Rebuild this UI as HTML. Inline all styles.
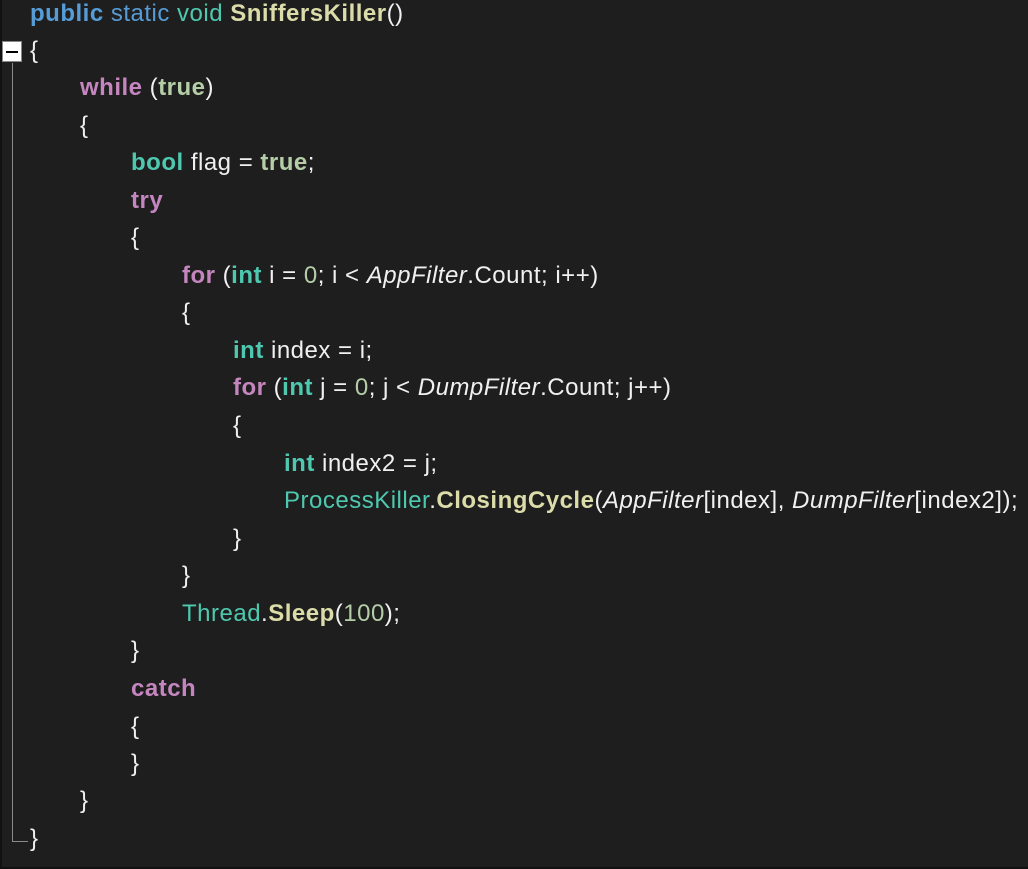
<!DOCTYPE html>
<html><head><style>
html,body{margin:0;padding:0;}
body{width:1028px;height:869px;background:#1e1e1e;position:relative;overflow:hidden;font-family:"Liberation Sans",sans-serif;font-size:24px;letter-spacing:0.5px;color:#f0f0f0;}
.l{position:absolute;height:30px;line-height:30px;white-space:pre;}
.b{color:#569cd6}.t{color:#4ec9b0}.y{color:#dcdcaa}.p{color:#c586c0}.g{color:#b5cea8}
.B{font-weight:bold}.i{font-style:italic}
#edge{position:absolute;left:0;top:0;width:2px;height:869px;background:#111}
#bot{position:absolute;left:0;bottom:0;width:1028px;height:2px;background:#111}
</style></head><body>
<div id="edge"></div><div id="bot"></div>
<div style="position:absolute;left:2px;top:41px;width:20px;height:21px;background:#fff;border:1px solid #888;box-sizing:border-box"></div>
<div style="position:absolute;left:6px;top:51px;width:12px;height:2px;background:#000"></div>
<div style="position:absolute;left:12px;top:63px;width:1px;height:778px;background:#8a8a8a"></div>
<div style="position:absolute;left:12px;top:841px;width:16px;height:1px;background:#8a8a8a"></div>
<div class="l" style="left:30px;top:-1px"><span class="b B">public</span> <span class="b">static</span> <span class="t">void</span> <span class="y B">SniffersKiller</span>()</div>
<div class="l" style="left:30px;top:36px">{</div>
<div class="l" style="left:80px;top:73px"><span class="p B">while</span> (<span class="g B">true</span>)</div>
<div class="l" style="left:80px;top:111px">{</div>
<div class="l" style="left:131px;top:148px"><span class="t B">bool</span> flag = <span class="g B">true</span>;</div>
<div class="l" style="left:131px;top:186px"><span class="p B">try</span></div>
<div class="l" style="left:131px;top:223px">{</div>
<div class="l" style="left:182px;top:261px"><span class="p B">for</span> (<span class="t B">int</span> i = <span class="g">0</span>; i &lt; <span class="i">AppFilter</span>.Count; i++)</div>
<div class="l" style="left:182px;top:298px">{</div>
<div class="l" style="left:233px;top:336px"><span class="t B">int</span> index = i;</div>
<div class="l" style="left:233px;top:373px"><span class="p B">for</span> (<span class="t B">int</span> j = <span class="g">0</span>; j &lt; <span class="i">DumpFilter</span>.Count; j++)</div>
<div class="l" style="left:233px;top:411px">{</div>
<div class="l" style="left:284px;top:449px"><span class="t B">int</span> index2 = j;</div>
<div class="l" style="left:284px;top:486px"><span class="t">ProcessKiller</span>.<span class="y B">ClosingCycle</span>(<span class="i">AppFilter</span>[index], <span class="i">DumpFilter</span>[index2]);</div>
<div class="l" style="left:233px;top:524px">}</div>
<div class="l" style="left:182px;top:561px">}</div>
<div class="l" style="left:182px;top:599px"><span class="t">Thread</span>.<span class="y B">Sleep</span>(<span class="g">100</span>);</div>
<div class="l" style="left:131px;top:636px">}</div>
<div class="l" style="left:131px;top:674px"><span class="p B">catch</span></div>
<div class="l" style="left:131px;top:712px">{</div>
<div class="l" style="left:131px;top:749px">}</div>
<div class="l" style="left:80px;top:786px">}</div>
<div class="l" style="left:30px;top:824px">}</div>
</body></html>
